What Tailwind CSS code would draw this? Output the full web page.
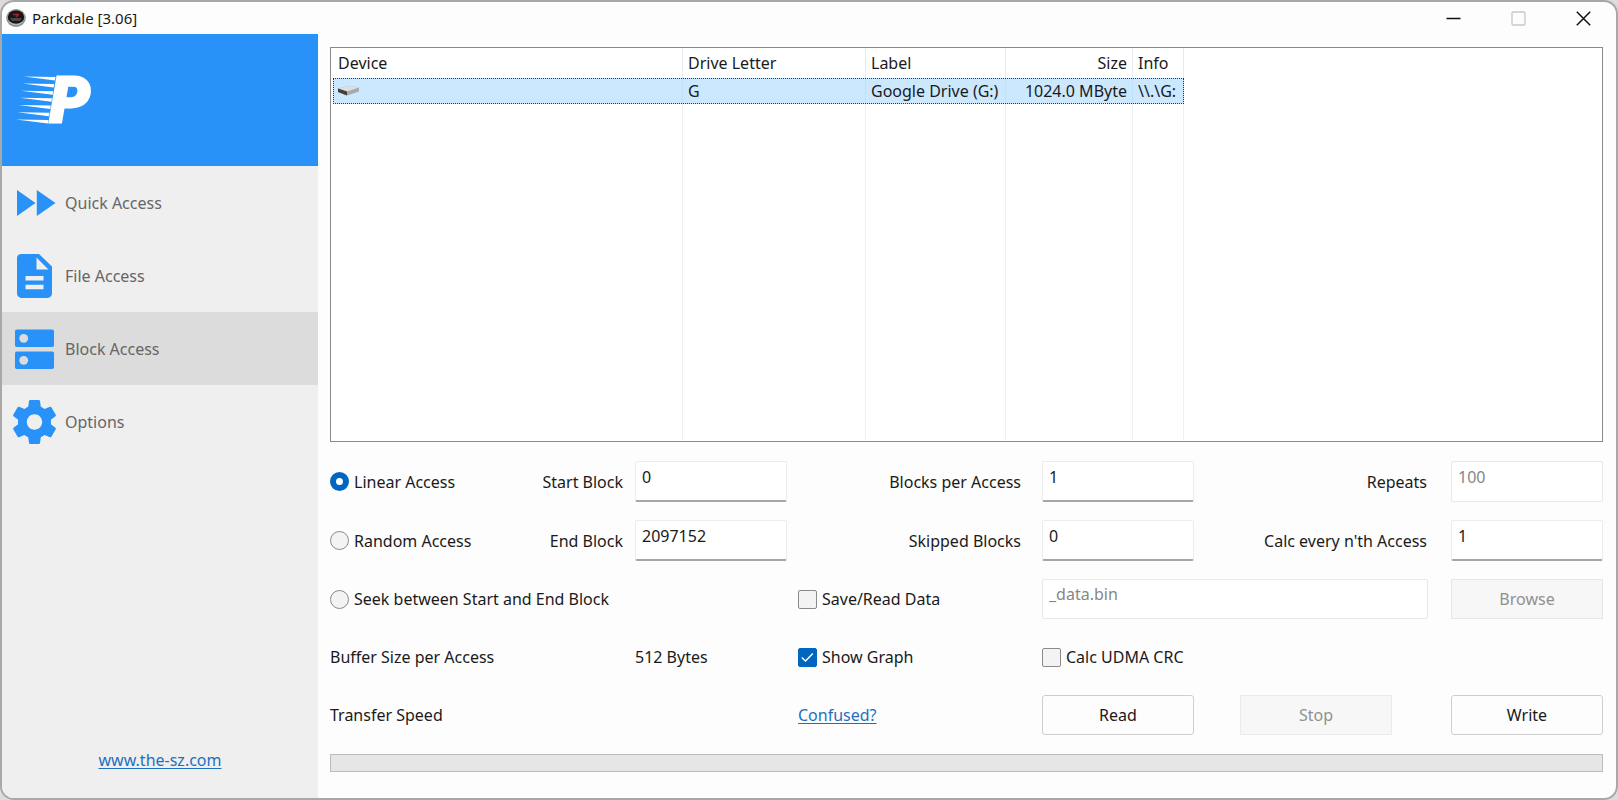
<!DOCTYPE html>
<html lang="en">
<head>
<meta charset="utf-8">
<meta name="viewport" content="width=device-width, initial-scale=1">
<title>Parkdale [3.06]</title>
<script src="https://cdn.jsdelivr.net/npm/@tailwindcss/browser@4"></script>
</head>
<body class="flex min-h-screen bg-[#dcdcdc] font-['Noto_Sans','Open_Sans',sans-serif] text-[16px] leading-6 text-[#1a1a1a]">
<div class="flex flex-1 flex-col overflow-hidden rounded-[14px] border-2 border-[#a8a8a8] bg-[#fdfdfd]">

  <header class="flex h-8 shrink-0 items-center pl-1">
    <svg class="size-5" viewBox="0 0 20 20" aria-hidden="true">
      <ellipse cx="10" cy="10" rx="9.8" ry="9" fill="#8e8e92"/>
      <ellipse cx="10" cy="9.5" rx="8.8" ry="7.8" fill="#b9b9bd"/>
      <ellipse cx="10" cy="9" rx="8.3" ry="6.8" fill="#1c1616"/>
      <path d="M4 10h12l-2 3H6z" fill="#4a4747"/>
      <path d="M7 6.500h6M10 9l3-3" stroke="#a3222c" stroke-width="1.500"/>
    </svg>
    <h1 class="ml-[6px] flex-1 text-[15px]">Parkdale [3.06]</h1>
    <div class="flex items-center gap-[50px] pr-[25px]">
      <button type="button" aria-label="Minimize"><svg class="size-[15px]" viewBox="0 0 15 15"><path d="M.5 7.500h14" stroke="#111" stroke-width="1.300"/></svg></button>
      <button type="button" aria-label="Maximize" disabled><svg class="size-[15px]" viewBox="0 0 15 15"><rect x="1" y="1" width="13" height="13" rx="1" fill="none" stroke="#c8c8c8" stroke-width="1.300"/></svg></button>
      <button type="button" aria-label="Close"><svg class="size-[15px]" viewBox="0 0 15 15"><path d="M.8.800l13.400 13.400M14.200.800L.8 14.200" stroke="#111" stroke-width="1.500"/></svg></button>
    </div>
  </header>

  <div class="flex flex-1">
    <aside class="flex w-[316px] shrink-0 flex-col bg-[#efefef]">
      <div class="flex h-[132px] items-center bg-[#2892f8] pl-[14px]">
        <svg class="h-20 w-24" viewBox="0 -16 96 80" role="img" aria-label="Parkdale" fill="#fff">
          <path d="M8 .5L39.500 1l-.5 3.500zM6.500 7.500L38.200 8l-.5 3.500zM5 14.700l32.200.5-.5 3.500zM3.800 21.800l32.200.5-.5 3.500zM2.500 29l32.300.5-.5 3.500zM1.200 36.200l32.300.5-.5 3.500zM0 43.400l32.500.5-.5 3.500z"/>
          <text x="34" y="46" font-family="Roboto" font-weight="900" font-style="italic" font-size="63" stroke="#fff" stroke-width="3">P</text>
        </svg>
      </div>
      <nav class="flex flex-col text-[#666]">
        <a href="#quick" class="flex h-[73px] items-center gap-[9px] pl-[10px]">
          <svg class="size-11" viewBox="0 0 44 44" fill="#2892f8" aria-hidden="true"><path d="M5 9v26l18.500-13zM24.800 9v26L43.500 22z"/></svg>Quick Access</a>
        <a href="#file" class="flex h-[73px] items-center gap-[9px] pl-[10px]">
          <svg class="size-11" viewBox="0 0 44 44" fill="#2892f8" aria-hidden="true"><path fill-rule="evenodd" d="M9 0h18l13 12.500V39.500a4.400 4.400 0 0 1-4.400 4.400H9.400A4.400 4.400 0 0 1 5 39.500V4.400A4.400 4.400 0 0 1 9 0zM24.500 3.500v12H36.500zM13.500 22v4.400h18V22zM13.500 30.800v4.400h18v-4.400z"/></svg>File Access</a>
        <a href="#block" aria-current="page" class="flex h-[73px] items-center gap-[9px] bg-[#dcdcdc] pl-[10px]">
          <svg class="size-11" viewBox="0 0 44 44" fill="#2892f8" aria-hidden="true"><rect x="3" y="2.500" width="39" height="17.500" rx="1.800"/><rect x="3" y="24.500" width="39" height="17.500" rx="1.800"/><g fill="#dcdcdc"><circle cx="11.700" cy="11.300" r="4.400"/><circle cx="11.700" cy="33.300" r="4.400"/></g></svg>Block Access</a>
        <a href="#options" class="flex h-[73px] items-center gap-[9px] pl-[10px]">
          <svg class="size-11" viewBox="0 0 44 44" fill="#2892f8" aria-hidden="true"><path transform="translate(-3.900 -4.400) scale(2.200)" d="M19.430 12.980c.04-.32.070-.640.070-.980s-.03-.660-.070-.980l2.110-1.650c.19-.15.240-.420.120-.640l-2-3.460c-.12-.22-.39-.300-.610-.220l-2.490 1c-.52-.4-1.080-.730-1.690-.980l-.38-2.650C14.460 2.180 14.250 2 14 2h-4c-.25 0-.46.180-.490.420l-.38 2.650c-.61.250-1.170.590-1.690.980l-2.490-1c-.23-.09-.49 0-.610.220l-2 3.460c-.13.220-.07.490.120.640l2.110 1.650c-.04.320-.070.650-.070.980s.03.660.070.980l-2.110 1.650c-.19.150-.240.420-.120.640l2 3.460c.12.220.39.300.610.220l2.490-1c.52.400 1.080.730 1.690.980l.38 2.650c.03.240.24.420.490.420h4c.25 0 .46-.18.490-.42l.38-2.650c.61-.25 1.170-.59 1.690-.98l2.490 1c.23.090.49 0 .610-.22l2-3.460c.12-.22.070-.49-.120-.64l-2.110-1.650zM12 15.500c-1.930 0-3.500-1.570-3.500-3.500s1.570-3.500 3.500-3.500 3.500 1.570 3.500 3.500-1.570 3.500-3.500 3.500z"/></svg>Options</a>
      </nav>
      <a href="#site" class="mt-auto mb-[26px] self-center text-[#1f6fc0] underline underline-offset-2">www.the-sz.com</a>
    </aside>

    <main class="flex flex-1 flex-col pt-[13px] pr-[13px] pb-[26px] pl-3">
      <div class="flex flex-1 border border-[#8a8a8e] bg-white px-[2px] pb-px">
        <table class="table-fixed border-separate border-spacing-0 w-[851px] text-left">
          <colgroup><col class="w-[350px]"><col class="w-[183px]"><col class="w-[140px]"><col class="w-[127px]"><col class="w-[51px]"></colgroup>
          <thead>
            <tr class="h-[30px] *:border-r *:border-[#e6eaf2] *:px-[5px] *:font-normal">
              <th>Device</th><th>Drive Letter</th><th>Label</th><th class="text-right">Size</th><th>Info</th>
            </tr>
          </thead>
          <tbody>
            <tr class="h-[26px] bg-[#cce8ff] outline-1 -outline-offset-1 outline-dotted outline-[#1c3a5c] *:border-r *:border-[#c2dff8] *:px-[5px] whitespace-nowrap">
              <td><svg class="h-3 w-[22px]" viewBox="0 0 22 12" role="img" aria-label="Drive"><path d="M0 3.500L12 1l9 1.500v4L9 10.500 0 7z" fill="#a9a9a9"/><path d="M0 3.500L12 1l9 1.500L9 6.500z" fill="#dedede"/><path d="M0 3.500l9 3v4L0 7z" fill="#3f3f3f"/></svg></td>
              <td>G</td><td>Google Drive (G:)</td><td class="text-right">1024.0 MByte</td><td>\\.\G:</td>
            </tr>
            <tr aria-hidden="true" class="*:border-r *:border-[#eef0f6]"><td></td><td></td><td></td><td></td><td></td></tr>
          </tbody>
        </table>
      </div>

      <form class="mt-[19px] grid grid-cols-[305fr_152px_255fr_152px_257fr_152px] grid-rows-[41px_41px_40px_40px_40px] items-center gap-y-[18px]">
        <div class="flex items-center justify-between pr-3">
          <label class="flex items-center gap-[5px]"><input type="radio" name="mode" checked class="size-[19px] appearance-none rounded-full border border-[#8a8a8a] bg-[#f3f3f3] checked:border-[6px] checked:border-[#0067c0] checked:bg-white">Linear Access</label>
          <label for="start">Start Block</label>
        </div>
        <input id="start" value="0" class="h-[41px] w-full rounded-[2px] border border-b-2 border-[#ececec] border-b-[#a6a6a6] bg-white px-[6px] pb-2">
        <label for="per" class="pr-[21px] text-right">Blocks per Access</label>
        <input id="per" value="1" class="h-[41px] w-full rounded-[2px] border border-b-2 border-[#ececec] border-b-[#a6a6a6] bg-white px-[6px] pb-2">
        <label for="repeats" class="pr-6 text-right">Repeats</label>
        <input id="repeats" value="100" disabled class="h-[41px] w-full rounded-[2px] border border-[#e8e8e8] bg-white px-[6px] pb-[10px] text-[#868686]">

        <div class="flex items-center justify-between pr-3">
          <label class="flex items-center gap-[5px]"><input type="radio" name="mode" class="size-[19px] appearance-none rounded-full border border-[#8a8a8a] bg-[#f3f3f3] checked:border-[6px] checked:border-[#0067c0] checked:bg-white">Random Access</label>
          <label for="end">End Block</label>
        </div>
        <input id="end" value="2097152" class="h-[41px] w-full rounded-[2px] border border-b-2 border-[#ececec] border-b-[#a6a6a6] bg-white px-[6px] pb-2">
        <label for="skip" class="pr-[21px] text-right">Skipped Blocks</label>
        <input id="skip" value="0" class="h-[41px] w-full rounded-[2px] border border-b-2 border-[#ececec] border-b-[#a6a6a6] bg-white px-[6px] pb-2">
        <label for="nth" class="pr-6 text-right">Calc every n'th Access</label>
        <input id="nth" value="1" class="h-[41px] w-full rounded-[2px] border border-b-2 border-[#ececec] border-b-[#a6a6a6] bg-white px-[6px] pb-2">

        <label class="col-span-2 flex items-center gap-[5px]"><input type="radio" name="mode" class="size-[19px] appearance-none rounded-full border border-[#8a8a8a] bg-[#f3f3f3] checked:border-[6px] checked:border-[#0067c0] checked:bg-white">Seek between Start and End Block</label>
        <label class="flex items-center gap-[5px] pl-[11px]"><input type="checkbox" class="size-[19px] appearance-none rounded-[2px] border border-[#8a8a8a] bg-[#f3f3f3]">Save/Read Data</label>
        <div class="col-span-2 pr-[23px]"><input value="_data.bin" aria-label="Data file" disabled class="block h-10 w-full rounded-[2px] border border-[#e8e8e8] bg-white px-[6px] pb-[10px] text-[#868686]"></div>
        <button type="button" disabled class="h-10 border border-[#e6e6e6] bg-[#f7f7f7] text-[#909090]">Browse</button>

        <span>Buffer Size per Access</span>
        <output>512 Bytes</output>
        <label class="flex items-center gap-[5px] pl-[11px]">
          <span class="grid size-[19px] *:col-start-1 *:row-start-1">
            <input type="checkbox" checked class="peer size-[19px] appearance-none rounded-[2px] border border-[#8a8a8a] bg-[#f3f3f3] checked:border-[#0067c0] checked:bg-[#0067c0]">
            <svg class="pointer-events-none hidden size-[19px] peer-checked:block" viewBox="0 0 19 19" fill="none" stroke="#fff" stroke-width="1.400"><path d="M3.800 9.500L7.500 13l7.300-7.600"/></svg>
          </span>Show Graph</label>
        <label class="col-span-3 flex items-center gap-[5px]"><input type="checkbox" class="size-[19px] appearance-none rounded-[2px] border border-[#8a8a8a] bg-[#f3f3f3]">Calc UDMA CRC</label>

        <span class="col-span-2">Transfer Speed</span>
        <a href="#help" class="pl-[11px] text-[#1f6fc0] underline underline-offset-2">Confused?</a>
        <button type="button" class="h-10 rounded-[3px] border border-[#cfcfcf] bg-[#fdfdfd]">Read</button>
        <div class="flex justify-center pr-[13px]"><button type="button" disabled class="h-10 w-[152px] border border-[#ebebeb] bg-[#f7f7f7] text-[#909090]">Stop</button></div>
        <button type="button" class="h-10 rounded-[3px] border border-[#cfcfcf] bg-[#fdfdfd]">Write</button>
      </form>

      <div role="progressbar" aria-label="Progress" aria-valuenow="0" aria-valuemin="0" aria-valuemax="100" class="mt-[19px] h-[18px] border border-[#bcbcbc] bg-[#e6e6e6]"></div>
    </main>
  </div>
</div>
</body>
</html>
